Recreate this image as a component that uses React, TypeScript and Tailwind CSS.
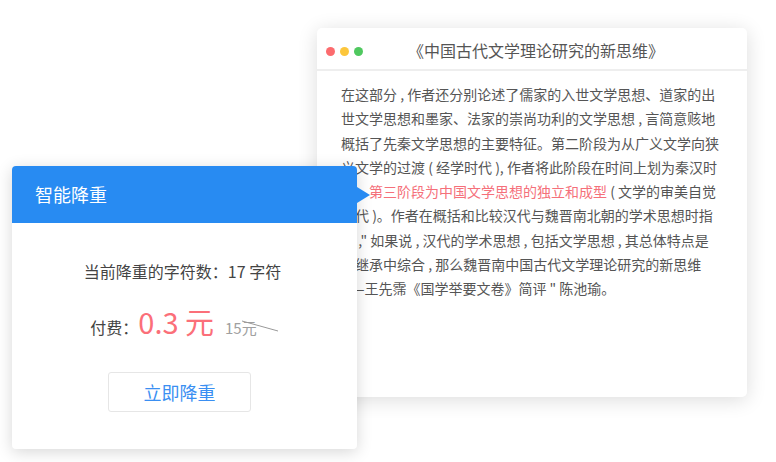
import React from "react";

const lines: React.ReactNode[] = [
  "在这部分 , 作者还分别论述了儒家的入世文学思想、道家的出",
  "世文学思想和墨家、法家的崇尚功利的文学思想 , 言简意赅地",
  "概括了先秦文学思想的主要特征。第二阶段为从广义文学向狭",
  "义文学的过渡 ( 经学时代 ), 作者将此阶段在时间上划为秦汉时",
  <>
    代，<span className="text-[#f5707a]">第三阶段为中国文学思想的独立和成型</span> ( 文学的审美自觉
  </>,
  "时代 )。作者在概括和比较汉代与魏晋南北朝的学术思想时指",
  "出 ," + '" 如果说 , 汉代的学术思想 , 包括文学思想 , 其总体特点是',
  "在继承中综合 , 那么魏晋南中国古代文学理论研究的新思维",
  "——王先霈《国学举要文卷》简评 \" 陈池瑜。",
];

const ArticleCard = () => (
  <div className="w-[430px] h-[369px] bg-white rounded-[5px] shadow-[0_3px_20px_rgba(0,0,0,0.14)]">
    <div className="relative h-[43px] flex items-center justify-center border-b-2 border-[#eeeeee]">
      <div className="absolute left-[9px] top-[19px] flex gap-[5px]">
        <span className="w-[9px] h-[9px] rounded-full bg-[#fc6b6e]" />
        <span className="w-[9px] h-[9px] rounded-full bg-[#fcc63c]" />
        <span className="w-[9px] h-[9px] rounded-full bg-[#4fc85f]" />
      </div>
      <span className="text-[16px] text-[#555555] pt-[3px] pl-[8px]">《中国古代文学理论研究的新思维》</span>
    </div>
    <div className="pt-[11px] pl-[24px] text-[14px] leading-[24.25px] text-[#555555]">
      {lines.map((l, i) => (
        <div key={i} className="whitespace-nowrap">
          {l}
        </div>
      ))}
    </div>
  </div>
);

const DedupeCard = () => (
  <div className="w-[345px] h-[283px] bg-white rounded-[4px] shadow-[0_3px_16px_rgba(0,0,0,0.16)] flex flex-col">
    <div className="relative h-[57px] bg-[#288bf2] rounded-t-[4px] flex items-center pl-[23px]">
      <span className="text-[18px] text-white">智能降重</span>
      <span className="absolute right-[-13px] top-[21px] w-0 h-0 border-y-[8px] border-y-transparent border-l-[13px] border-l-[#288bf2]" />
    </div>
    <div className="flex flex-col items-center">
      <div className="mt-[37px] mr-[4px] text-[16px] text-[#444444] leading-[22px]">当前降重的字符数：17 字符</div>
      <div className="mt-[19px] flex items-baseline h-[40px]">
        <span className="text-[16px] text-[#444444]">付费：</span>
        <span className="text-[29px] text-[#fb6f79] leading-[40px]">0.3 元</span>
        <span className="relative ml-[11px] mr-[22px] text-[15px] text-[#a0a0a0]">
          15元
          <svg className="absolute left-[17px] top-[2px]" width="38" height="14" viewBox="0 0 38 14">
            <line x1="0" y1="2" x2="36" y2="12" stroke="#999" strokeWidth="1" />
          </svg>
        </span>
      </div>
      <button className="mt-[31px] mr-[10px] w-[143px] h-[40px] border border-[#e6e6e6] rounded-[3px] text-[18px] text-[#3a8ff2] bg-white">
        立即降重
      </button>
    </div>
  </div>
);

export default function App() {
  return (
    <div
      className="relative w-[776px] h-[462px] bg-white overflow-hidden"
      style={{ fontFamily: '"Noto Sans CJK SC", "Noto Sans", sans-serif' }}
    >
      <div className="absolute left-[317px] top-[28px]">
        <ArticleCard />
      </div>
      <div className="absolute left-[12px] top-[166px]">
        <DedupeCard />
      </div>
    </div>
  );
}
